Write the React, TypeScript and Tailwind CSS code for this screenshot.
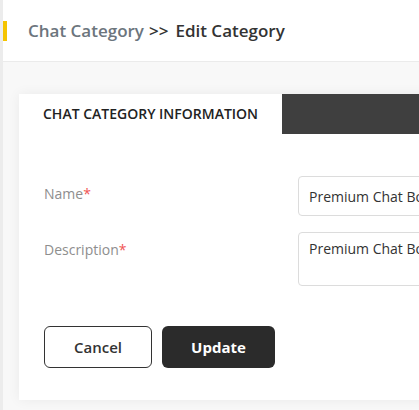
export default function App() {
  return (
    <div className="flex h-[410px] w-[419px] overflow-hidden bg-[#f8f8f8] font-['Open_Sans',sans-serif]">
      <div className="w-[3px] shrink-0 bg-[#ececec]" />

      <div className="flex min-w-0 flex-1 flex-col">
        <header className="flex h-[62px] shrink-0 items-center border-b border-[#ebebeb] bg-white">
          <span className="h-5 w-1 bg-[#f5c400]" />
          <h1 className="ml-[21px] whitespace-nowrap text-[17px] font-semibold text-[#333]">
            <span className="text-[#6c757d]">Chat Category</span>
            <span className="ml-[5px]">&gt;&gt;</span>
            <span className="ml-[7px]">Edit Category</span>
          </h1>
        </header>

        <main className="pl-4 pt-8">
          <section className="w-[580px] bg-white shadow-[0_0_12px_rgba(0,0,0,0.06)]">
            <div className="flex h-10">
              <div className="flex w-[263px] items-center pl-6 text-sm font-semibold text-[#222]">
                CHAT CATEGORY INFORMATION
              </div>
              <div className="flex-1 bg-[#3f3f3f]" />
            </div>

            <div className="px-[25px] pb-8 pt-[42px]">
              <div className="flex">
                <label className="w-[254px] shrink-0 pt-2 text-sm leading-5 text-[#8e8e8e]">
                  Name<span className="text-[#f05454]">*</span>
                </label>
                <input
                  className="h-10 w-[300px] rounded border border-[#dcdcdc] px-[10px] text-sm text-[#333] outline-none"
                  defaultValue="Premium Chat Box"
                  type="text"
                />
              </div>

              <div className="mt-4 flex">
                <label className="w-[254px] shrink-0 pt-2 text-sm leading-5 text-[#8e8e8e]">
                  Description<span className="text-[#f05454]">*</span>
                </label>
                <textarea
                  className="h-[54px] w-[300px] resize-none rounded border border-[#dcdcdc] px-[10px] pt-[6px] text-sm leading-5 text-[#333] outline-none"
                  defaultValue="Premium Chat Box"
                />
              </div>

              <div className="mt-10 flex gap-[10px]">
                <button
                  className="h-[42px] w-[108px] rounded-md border border-[#333] bg-white text-[15px] font-semibold text-[#333]"
                  type="button"
                >
                  Cancel
                </button>
                <button
                  className="h-[42px] w-[113px] rounded-md bg-[#2b2b2b] text-[15px] font-bold text-white"
                  type="button"
                >
                  Update
                </button>
              </div>
            </div>
          </section>
        </main>
      </div>
    </div>
  );
}
